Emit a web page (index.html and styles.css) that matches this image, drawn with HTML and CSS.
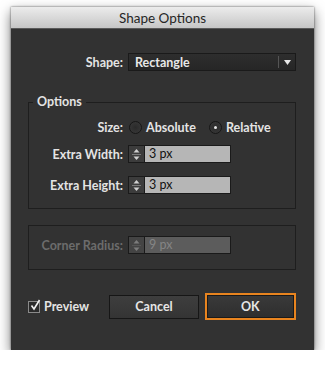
FILE: index.html
```html
<!DOCTYPE html>
<html>
<head>
<meta charset="utf-8">
<link rel="stylesheet" href="styles.css">
</head>
<body>
<div class="window">
  <div class="titlebar">Shape Options</div>
  <div class="content">
    <div class="row shape-row">
      <span class="label">Shape:</span>
      <div class="select">
        <span class="select-text">Rectangle</span>
        <span class="select-btn"><svg width="7" height="5" viewBox="0 0 7 5"><path d="M0 0H7L3.5 5Z" fill="#e8e8e8"/></svg></span>
      </div>
    </div>

    <fieldset class="group options">
      <legend>Options</legend>
      <div class="row size-row">
        <span class="label">Size:</span>
        <span class="radio"></span><span class="rlabel">Absolute</span>
        <span class="radio on"></span><span class="rlabel">Relative</span>
      </div>
      <div class="row field-row">
        <span class="label">Extra Width:</span>
        <div class="spin">
          <span class="spin-btn"><svg width="15" height="16" viewBox="0 0 15 16"><path d="M4.5 6.5L7.5 3L10.5 6.5Z" fill="#d0d0d0"/><path d="M3 8.5H12" stroke="#7a7a7a" stroke-width="1"/><path d="M4.5 10.5L7.5 14L10.5 10.5Z" fill="#d0d0d0"/></svg></span>
          <span class="spin-input">3 px</span>
        </div>
      </div>
      <div class="row field-row second">
        <span class="label">Extra Height:</span>
        <div class="spin">
          <span class="spin-btn"><svg width="15" height="16" viewBox="0 0 15 16"><path d="M4.5 6.5L7.5 3L10.5 6.5Z" fill="#d0d0d0"/><path d="M3 8.5H12" stroke="#7a7a7a" stroke-width="1"/><path d="M4.5 10.5L7.5 14L10.5 10.5Z" fill="#d0d0d0"/></svg></span>
          <span class="spin-input">3 px</span>
        </div>
      </div>
    </fieldset>

    <div class="group corner">
      <div class="row field-row disabled">
        <span class="label">Corner Radius:</span>
        <div class="spin">
          <span class="spin-btn"><svg width="15" height="16" viewBox="0 0 15 16"><path d="M4.5 6.5L7.5 3L10.5 6.5Z" fill="#7c7c7c"/><path d="M3 8.5H12" stroke="#555" stroke-width="1"/><path d="M4.5 10.5L7.5 14L10.5 10.5Z" fill="#7c7c7c"/></svg></span>
          <span class="spin-input">9 px</span>
        </div>
      </div>
    </div>

    <div class="footer">
      <div class="check">
        <span class="box"><svg width="13" height="13" viewBox="0 0 13 13"><path d="M2.5 6.5L5 10L10.5 1" stroke="#f0f0f0" stroke-width="1.6" fill="none"/></svg></span>
        <span class="check-text">Preview</span>
      </div>
      <div class="btn cancel">Cancel</div>
      <div class="btn ok">OK</div>
    </div>
  </div>
</div>
</body>
</html>
```

FILE: styles.css
```css
html, body {
  margin: 0;
  padding: 0;
  background: #ffffff;
}
body {
  padding: 7px 0 0 11px;
  font-family: "Lato", "DejaVu Sans", sans-serif;
}
.window {
  width: 303px;
  height: 343px;
  background: #323232;
  box-shadow: 0 5px 12px rgba(0,0,0,0.55), 0 0 2px rgba(0,0,0,0.6);
  display: flex;
  flex-direction: column;
}
.titlebar {
  height: 22px;
  box-sizing: border-box;
  background: linear-gradient(#ececec, #c6c6c6);
  border-bottom: 1px solid #5a5a5a;
  color: #262626;
  font-size: 13.5px;
  line-height: 22px;
  text-align: center;
}
.content {
  padding: 24px 18px 0 17px;
  display: flex;
  flex-direction: column;
}
.row {
  display: flex;
  align-items: center;
  height: 18px;
}
.label {
  width: 94px;
  margin-right: 5px;
  text-align: right;
  color: #e4e4e4;
  font-size: 12.5px;
  font-weight: bold;
  white-space: nowrap;
}
.shape-row .label {
  width: 95px;
}
.select {
  width: 168px;
  height: 18px;
  box-sizing: border-box;
  border: 1px solid #1a1a1a;
  background: linear-gradient(#2e2e2e, #262626);
  display: flex;
  align-items: center;
}
.select-text {
  flex: 1;
  padding-left: 6px;
  color: #e8e8e8;
  font-size: 12.5px;
  font-weight: bold;
}
.select-btn {
  width: 16px;
  height: 12px;
  border-left: 1px solid #555;
  display: flex;
  align-items: center;
  justify-content: center;
}
.group {
  margin: 0;
  border: 1px solid #1e1e1e;
}
.options {
  margin-top: 24px;
  padding: 0 0 14px 0;
  min-width: 0;
}
.options legend {
  margin-left: 4px;
  padding: 0 4px;
  color: #e4e4e4;
  font-size: 12.5px;
  font-weight: bold;
  line-height: 14px;
}
.size-row {
  margin-top: 9px;
}
.radio {
  width: 11px;
  height: 11px;
  border-radius: 50%;
  border: 1px solid #161616;
  background: radial-gradient(#2a2a2a, #3a3a3a);
  margin-left: 1px;
  margin-right: 4px;
  display: flex;
  align-items: center;
  justify-content: center;
}
.radio.on::after {
  content: "";
  width: 3px;
  height: 3px;
  border-radius: 50%;
  background: #e6e6e6;
}
.radio.on {
  margin-left: 13px;
}
.rlabel {
  color: #e4e4e4;
  font-size: 12.5px;
  font-weight: bold;
}
.field-row {
  margin-top: 9px;
}
.field-row.second {
  margin-top: 13px;
}
.spin {
  display: flex;
  height: 18px;
  width: 103px;
  box-sizing: border-box;
  border: 1px solid #1a1a1a;
}
.spin-btn {
  width: 15px;
  background: #3c3c3c;
  border-right: 1px solid #1a1a1a;
  display: flex;
}
.spin-input {
  flex: 1;
  background: #b6b6b6;
  color: #111;
  font-size: 12.5px;
  padding-left: 4px;
  line-height: 16px;
}
.corner {
  margin-top: 16px;
  padding: 10px 0 15px 0;
}
.corner .field-row {
  margin-top: 0;
}
.disabled .label {
  color: #6c6c6c;
}
.disabled .spin-btn {
  background: #444;
}
.disabled .spin-input {
  background: #5c5c5c;
  color: #858585;
}
.footer {
  margin-top: 23px;
  display: flex;
  align-items: center;
  height: 27px;
}
.check {
  display: flex;
  align-items: center;
  width: 82px;
}
.box {
  width: 12px;
  height: 12px;
  box-sizing: border-box;
  border: 1px solid #8a8a8a;
  background: #2a2a2a;
  margin-right: 4px;
  display: flex;
  position: relative;
}
.box svg {
  position: absolute;
  left: 0;
  top: -3px;
}
.check-text {
  color: #e4e4e4;
  font-size: 12.5px;
  font-weight: bold;
}
.btn {
  box-sizing: border-box;
  display: flex;
  align-items: center;
  justify-content: center;
  font-size: 12.5px;
  font-weight: bold;
  color: #e6e6e6;
}
.cancel {
  width: 90px;
  height: 24px;
  border: 1px solid #161616;
  background: linear-gradient(#3e3e3e, #343434);
}
.ok {
  margin-left: 6px;
  width: 92px;
  height: 27px;
  border: 2px solid #e8841f;
  background: linear-gradient(#3a3a3a, #2e2e2e);
  box-shadow: inset 0 0 0 1px #1a1a1a;
}
```
